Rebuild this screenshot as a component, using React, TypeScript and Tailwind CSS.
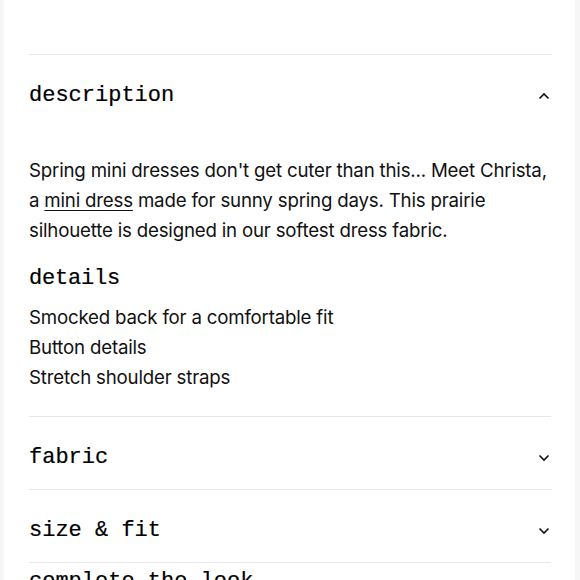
import React from "react";

const mono = { fontFamily: '"Liberation Mono", "DejaVu Sans Mono", monospace' };
const sans = { fontFamily: 'Inter, "Liberation Sans", sans-serif' };

function Chevron({ up }: { up?: boolean }) {
  return (
    <svg width="12" height="8" viewBox="0 0 12 8" fill="none" className="shrink-0">
      <path
        d={up ? "M1.5 6.5 L6 2 L10.5 6.5" : "M1.5 1.5 L6 6 L10.5 1.5"}
        stroke="#111"
        strokeWidth="1.6"
      />
    </svg>
  );
}

function Header({ title, up }: { title: string; up?: boolean }) {
  return (
    <div className="flex h-[72px] items-center justify-between pt-[10px] pr-[1px]">
      <span className="text-[22px] leading-[28px] text-black [-webkit-text-stroke:0.2px_black]" style={mono}>
        {title}
      </span>
      <Chevron up={up} />
    </div>
  );
}

export default function App() {
  return (
    <div className="flex h-[580px] w-[580px] overflow-hidden bg-[#f6f6f6]">
      <div className="ml-[4px] w-[571px] bg-white pl-[25px] pr-[24px]">
        <div className="h-[54px]" />
        <div className="border-t border-[#e8e8e8]">
          <Header title="description" up />
          <div className="pt-[29px] text-[18.7px] leading-[30px] tracking-[-0.2px] text-[#111]" style={sans}>
            <p>
              Spring mini dresses don't get cuter than this... Meet Christa, a{" "}
              <span className="underline decoration-1 underline-offset-[3px]">mini dress</span> made for
              sunny spring days. This prairie silhouette is designed in our softest dress fabric.
            </p>
            <h3 className="mt-[19px] text-[22px] leading-[28px] text-black [-webkit-text-stroke:0.2px_black]" style={mono}>
              details
            </h3>
            <ul className="mt-[10px]">
              <li>Smocked back for a comfortable fit</li>
              <li>Button details</li>
              <li>Stretch shoulder straps</li>
            </ul>
          </div>
          <div className="h-[23px]" />
        </div>
        <div className="border-t border-[#e8e8e8]">
          <Header title="fabric" />
        </div>
        <div className="border-t border-[#e8e8e8]">
          <Header title="size & fit" />
        </div>
        <div className="border-t border-[#e8e8e8] pt-[5px]">
          <span className="text-[22px] leading-[28px] text-black [-webkit-text-stroke:0.2px_black]" style={mono}>
            complete the look
          </span>
        </div>
      </div>
    </div>
  );
}
